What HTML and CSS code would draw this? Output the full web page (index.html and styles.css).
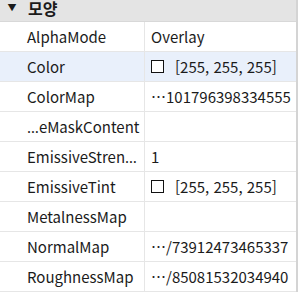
FILE: index.html
```html
<!DOCTYPE html>
<html lang="ko">
    <head>
        <meta charset="UTF-8">
        <meta name="viewport" content="width=device-width, initial-scale=1.0">
        <title>Properties</title>
        <link rel="stylesheet" href="styles.css">
    </head>
    <body>
        <main class="panel">
            <div class="section-head">
                <span class="caret">&#9660;</span>
                <span class="section-title">모양</span>
            </div>
            <div class="prop-row">
                <div class="prop-name">AlphaMode</div>
                <div class="prop-value">Overlay</div>
            </div>
            <div class="prop-row selected">
                <div class="prop-name">Color</div>
                <div class="prop-value"><span class="swatch"></span>[255, 255, 255]</div>
            </div>
            <div class="prop-row">
                <div class="prop-name">ColorMap</div>
                <div class="prop-value">&#8943;101796398334555</div>
            </div>
            <div class="prop-row">
                <div class="prop-name"><span class="ell">&hellip;</span>eMaskContent</div>
                <div class="prop-value"></div>
            </div>
            <div class="prop-row">
                <div class="prop-name">EmissiveStren<span class="ell">&hellip;</span></div>
                <div class="prop-value">1</div>
            </div>
            <div class="prop-row">
                <div class="prop-name">EmissiveTint</div>
                <div class="prop-value"><span class="swatch"></span>[255, 255, 255]</div>
            </div>
            <div class="prop-row">
                <div class="prop-name">MetalnessMap</div>
                <div class="prop-value"></div>
            </div>
            <div class="prop-row">
                <div class="prop-name">NormalMap</div>
                <div class="prop-value">&#8943;/73912473465337</div>
            </div>
            <div class="prop-row">
                <div class="prop-name">RoughnessMap</div>
                <div class="prop-value">&#8943;/85081532034940</div>
            </div>
        </main>
    </body>
</html>
```

FILE: styles.css
```css
html, body {
    margin: 0;
    padding: 0;
    overflow: hidden;
    background: #ffffff;
}

body {
    font-family: "Noto Sans CJK KR", "Noto Sans", sans-serif;
    font-size: 15px;
    color: #1b1b1b;
}

.panel {
    margin-top: -6px;
    width: 296px;
    border-right: 2px solid #d4d4d4;
}

.section-head {
    display: flex;
    align-items: center;
    height: 27px;
    background: #e4e4e4;
    border-bottom: 1px solid #d8d8d8;
}

.caret {
    width: 28px;
    font-size: 9px;
    text-align: center;
    padding-right: 4px;
    box-sizing: border-box;
}

.section-title {
    font-weight: bold;
    font-size: 16px;
}

.prop-row {
    display: flex;
    height: 29px;
    border-bottom: 1px solid #e6e6e6;
}

.prop-row.selected {
    background: #e9f0fb;
}

.prop-name {
    width: 145px;
    padding-left: 27px;
    box-sizing: border-box;
    border-right: 1px solid #e6e6e6;
    display: flex;
    align-items: center;
    white-space: nowrap;
    overflow: hidden;
}

.ell {
    font-family: "Noto Sans", sans-serif;
    font-size: 15px;
}

.prop-value {
    flex: 1;
    padding-left: 6px;
    display: flex;
    align-items: center;
    white-space: nowrap;
    overflow: hidden;
}

.swatch {
    width: 11px;
    height: 11px;
    border: 1px solid #111;
    background: #fff;
    margin-right: 11px;
}
```
